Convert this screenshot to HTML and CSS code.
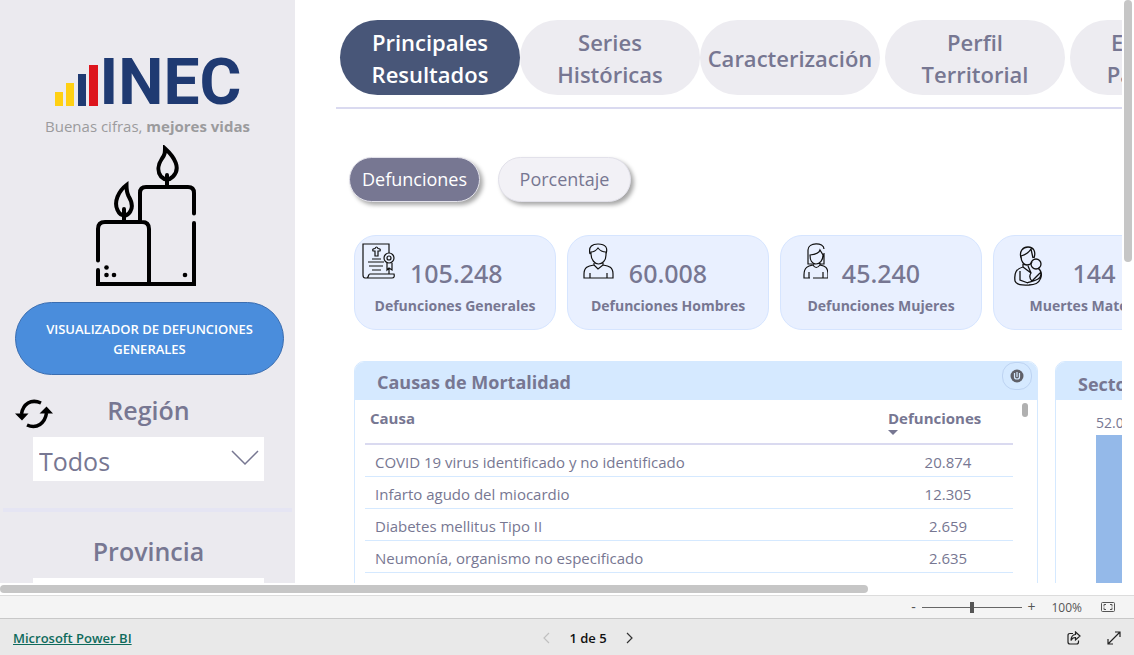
FILE: index.html
```html
<!DOCTYPE html>
<html lang="es">
<head>
<meta charset="utf-8">
<meta name="viewport" content="width=device-width, initial-scale=1">
<title>Visualizador de Defunciones Generales</title>
<link rel="stylesheet" href="styles.css">
</head>
<body>
<div class="app">
  <div class="viewport">
    <div class="report">
      <aside class="sidebar">
        <div class="brand">
          <div class="brand-mark">
            <svg class="brand-bars" viewBox="0 0 46 50" aria-hidden="true">
              <path fill="#ffd012" d="M1 36h8v14H1zM12 27h8v23h-8z"/>
              <path fill="#1f3a72" d="M24 18h8v32h-8z"/>
              <path fill="#dd151d" d="M35 9h9v41h-9z"/>
            </svg>
            <span class="brand-name">INEC</span>
          </div>
          <p class="brand-tag">Buenas cifras, <b>mejores vidas</b></p>
        </div>
        <svg class="candles" viewBox="92 145 106 142" aria-hidden="true">
          <g fill="none" stroke="#000" stroke-width="4" stroke-linecap="round">
            <path d="M139 221V193q0-6 6-6h42q6 0 6 6v20.500M193 223v61H97v-14M97 260.500V229q0-7 7-7h37q7 0 7 7v55"/>
            <path d="M164 148.500c10 9 16 20 8 28-4 4-8 4-12 0-4-5-3-12 1-18 3-4 3-6 3-10zM125.500 185c-8 6-13 17-9 25 3 7 10 7 13 1 3-5 1-10-2-15-2-4-2-7-2-11z"/>
            <path d="M166 175v12M123 209v12"/>
          </g>
          <g><circle cx="105.500" cy="267.500" r="2.300"/><circle cx="105.500" cy="275" r="2.300"/><circle cx="113" cy="275" r="2.300"/><circle cx="184" cy="275" r="2.300"/></g>
        </svg>
        <button class="report-title" type="button">VISUALIZADOR DE DEFUNCIONES GENERALES</button>
        <section class="filter">
          <div class="filter-head">
            <button class="reset" type="button" aria-label="Restablecer filtros">
              <svg viewBox="0 0 38 30" aria-hidden="true">
                <g fill="none" stroke="#000" stroke-width="3.500"><path d="M26 4C16-.5 8 5 6.500 15M12 26c10 4.500 18-2 19.500-12"/></g>
                <path d="M0 14.500h13.500l-6.500 7zM24.500 14.500H38l-6.500-7z"/>
              </svg>
            </button>
            <label class="filter-label" for="region">Región</label>
          </div>
          <div class="picker">
            <select id="region"><option>Todos</option></select>
            <svg viewBox="0 0 28 16" aria-hidden="true"><path d="M1 1l13 13L27 1" fill="none" stroke="#777792" stroke-width="1.500"/></svg>
          </div>
        </section>
        <hr class="side-rule">
        <section class="filter">
          <div class="filter-head"><label class="filter-label" for="provincia">Provincia</label></div>
          <div class="picker">
            <select id="provincia"><option>Todos</option></select>
          </div>
        </section>
      </aside>

      <main class="content">
        <nav class="tabs">
          <div class="tab-group">
            <button class="tab tab-active" type="button">Principales Resultados</button>
            <button class="tab" type="button">Series Históricas</button>
            <button class="tab" type="button">Caracterización</button>
          </div>
          <button class="tab" type="button">Perfil Territorial</button>
          <button class="tab" type="button">Efecto de Pandemia</button>
        </nav>
        <div class="toggles">
          <button class="toggle toggle-active" type="button">Defunciones</button>
          <button class="toggle" type="button">Porcentaje</button>
        </div>
        <div class="cards">
          <article class="card">
            <svg class="card-icon" viewBox="0 0 34 36" aria-hidden="true"><g fill="none" stroke="#111" stroke-width="1.200">
              <path d="M5 35H3q-2 0-2-3V1h26v9M27 26v5M5 35c2-1 1-4 3-4h24q1 4-2 4H5M13 5.500q1.500-3 3 0 3 0 2 2.500h-2v5h-3V8h-2q-1-2.500 2-2.500zM10 16h9M6 19h16M7 23h14M10 27h9M25 20v7l2-2 3 2v-7"/>
              <circle cx="27" cy="15" r="5"/><circle cx="27" cy="15" r="2"/></g></svg>
            <strong class="card-value">105.248</strong>
            <span class="card-label">Defunciones Generales</span>
          </article>
          <article class="card">
            <svg class="card-icon" viewBox="0 0 34 36" aria-hidden="true"><g fill="none" stroke="#111" stroke-width="1.200">
              <path d="M10 9q4 0 7-4 3 4 8 4v3c0 6-4 9-7.500 9S10 17 10 11zM9 11C7 3 12 1 17 1c8 0 10 4 8 10M13 20v2l4 4 5-4v-2M13 22c-6 1-10 2-10 9v4h29v-4c0-7-4-8-10-9M9 30v5M26 30v5"/></g></svg>
            <strong class="card-value">60.008</strong>
            <span class="card-label">Defunciones Hombres</span>
          </article>
          <article class="card">
            <svg class="card-icon" viewBox="-9 0 34 36" aria-hidden="true"><g fill="none" stroke="#111" stroke-width="1.200">
              <path d="M9 21H5V7c0-8 16-8 16-1M21 10v11h-4M7 12q9-1 10-5l3 5c0 5-3 9-7 9s-6-4-6-9zM10 20v2q3 5 7 0v-2M10 22c-5 1-9 2-9 10v3h6M10 35h15v-3c0-8-3-9-8-10M6 29v6M20 29v6"/></g></svg>
            <strong class="card-value">45.240</strong>
            <span class="card-label">Defunciones Mujeres</span>
          </article>
          <article class="card card-maternal">
            <svg class="card-icon" viewBox="0 0 32 40" aria-hidden="true"><g fill="none" stroke="#111" stroke-width="1.300">
              <path d="M8 12C6 5 10 1 15 1c6 0 8 5 6 11M8 10q7-2 10-7l2 9M8 10c0 6 3 9 6 9 2 0 4-1 5-3M10 18v3c-7 2-9 6-8 14 2 5 9 4 15 4M7 25v9l8 3M15 20l3 7c-2 3-1 6 1 8l9-9M10 21l8 6M25 22c6 5 4 17-9 17M28 28c0 6-8 7-14 9"/>
              <circle cx="23" cy="18" r="5"/></g></svg>
            <strong class="card-value">144</strong>
            <span class="card-label">Muertes Maternas</span>
          </article>
        </div>
        <div class="panels">
          <section class="panel">
            <header class="panel-head">
              <h2>Causas de Mortalidad</h2>
              <button class="info" type="button" aria-label="Información">
                <svg viewBox="0 0 14 14" aria-hidden="true"><circle cx="7" cy="7" r="6.500" fill="#5f6068"/><path d="M4.500 4v4q0 2 2.500 2t2.500-2V4M7 3v5" fill="none" stroke="#d6e9ff" stroke-width="1.200"/></svg>
              </button>
            </header>
            <div class="panel-body">
              <table>
                <thead><tr><th scope="col">Causa</th><th class="num" scope="col">Defunciones<svg class="sort" viewBox="0 0 10 5" aria-hidden="true"><path d="M0 0h10L5 5z"/></svg></th></tr></thead>
                <tbody>
                  <tr><td>COVID 19 virus identificado y no identificado</td><td class="num">20.874</td></tr>
                  <tr><td>Infarto agudo del miocardio</td><td class="num">12.305</td></tr>
                  <tr><td>Diabetes mellitus Tipo II</td><td class="num">2.659</td></tr>
                  <tr><td>Neumonía, organismo no especificado</td><td class="num">2.635</td></tr>
                </tbody>
              </table>
              <span class="table-thumb"></span>
            </div>
          </section>
          <section class="panel panel-sector">
            <header class="panel-head"><h2>Sector</h2></header>
            <div class="chart">
              <span class="bar-label">52.088</span>
              <div class="bar"></div>
            </div>
          </section>
        </div>
      </main>
    </div>
    <div class="vscroll"><span></span></div>
    <div class="hscroll"><span></span></div>
  </div>

  <div class="zoombar">
    <button type="button" class="zoom-step" aria-label="Alejar">-</button>
    <input type="range" min="0" max="100" value="50" aria-label="Zoom">
    <button type="button" class="zoom-step" aria-label="Acercar">+</button>
    <span class="zoom-value">100%</span>
    <button type="button" aria-label="Ajustar a la página">
      <svg width="14" height="10" viewBox="0 0 14 10" aria-hidden="true"><g fill="none" stroke="#555"><rect x=".5" y=".5" width="13" height="9" rx="1"/><path d="M5 2.500H3v2M3 5.500v2h2M9 2.500h2v2M11 5.500v2H9"/></g></svg>
    </button>
  </div>
  <footer class="footer">
    <a href="#">Microsoft Power BI</a>
    <div class="pager">
      <button type="button" aria-label="Página anterior" disabled><svg width="8" height="12" viewBox="0 0 8 12" aria-hidden="true"><path d="M7 1L2 6l5 5" fill="none" stroke="#c0c0c0" stroke-width="1.200"/></svg></button>
      <span>1 de 5</span>
      <button type="button" aria-label="Página siguiente"><svg width="8" height="12" viewBox="0 0 8 12" aria-hidden="true"><path d="M1 1l5 5-5 5" fill="none" stroke="#333" stroke-width="1.200"/></svg></button>
    </div>
    <div class="actions">
      <button type="button" aria-label="Compartir"><svg width="14" height="14" viewBox="0 0 14 14" aria-hidden="true"><path d="M6 2.500H3q-2 0-2 2V11q0 2 2 2h6.500q2 0 2-2v-1.500M8.500 1l4.500 4-4.500 4V6.500Q5 6.500 4 9.500 4 4 8.500 3.500z" fill="none" stroke="#222" stroke-width="1.200"/></svg></button>
      <button type="button" aria-label="Pantalla completa"><svg width="14" height="14" viewBox="0 0 14 14" aria-hidden="true"><path d="M1 13L13 1M8 1h5v5M1 8v5h5" fill="none" stroke="#222" stroke-width="1.200"/></svg></button>
    </div>
  </footer>
</div>
</body>
</html>
```
FILE: styles.css
```css
* { box-sizing: border-box; }
body {
  margin: 0;
  font-family: "Open Sans", "Noto Sans", sans-serif;
  color: #777792;
  background: #fff;
}
button { padding: 0; border: 0; background: none; font: inherit; color: inherit; }
svg { display: block; }

.app { display: flex; flex-direction: column; height: 100vh; }
.viewport {
  flex: 1;
  min-height: 0;
  display: grid;
  grid-template: minmax(0, 1fr) 12px / minmax(0, 1fr) 12px;
}
.report { display: flex; overflow: hidden; }
.vscroll { padding: 0 2px; }
.vscroll span { display: block; height: 45%; border-radius: 4px; background: #c6c6c6; }
.hscroll { padding: 2px 0; }
.hscroll span { display: block; width: 77.400%; height: 8px; border-radius: 4px; background: #c6c6c6; }

/* Sidebar */
.sidebar {
  flex: none;
  width: 295px;
  display: flex;
  flex-direction: column;
  align-items: center;
  background: #ebeaef;
}
.sidebar > * { flex-shrink: 0; }
.brand { padding-top: 56px; }
.brand-mark { display: flex; justify-content: center; height: 52px; }
.brand-bars { width: 46px; height: 50px; }
.brand-name {
  font: 700 64px/54px Roboto, sans-serif;
  color: #1f3a72;
}
.brand-tag { margin: 8px 0 0; font-size: 15px; line-height: 20px; color: #9b9b9d; }
.candles { width: 106px; height: 142px; margin: 9px 4px 0 0; }
.report-title {
  width: 269px;
  height: 73px;
  margin: 15px 0 0 4px;
  padding: 0 20px;
  border: 1px solid #3a6db0;
  border-radius: 37px;
  background: #4a8ddc;
  color: #fff;
  font-size: 13px;
  font-weight: 600;
  line-height: 20px;
}
.filter { align-self: stretch; padding: 17px 31px 0 33px; }
.filter-head { position: relative; display: flex; justify-content: center; height: 45px; }
.filter-label { font-size: 25px; font-weight: 600; line-height: 36px; }
.reset { position: absolute; left: -18px; top: 7px; width: 38px; height: 30px; }
.picker {
  display: flex;
  align-items: center;
  position: relative;
  height: 44px;
  background: #fff;
}
.picker select {
  width: 100%;
  height: 100%;
  padding: 4px 40px 0 6px;
  border: 0;
  appearance: none;
  background: none;
  font: 400 25px/36px "Open Sans", sans-serif;
  color: #777792;
}
.picker svg { position: absolute; right: 5px; top: 13px; width: 28px; height: 16px; }
.side-rule { align-self: stretch; height: 4px; margin: 27px 3px 4px; border: 0; background: #e5e5f3; }

/* Content */
.content { flex: none; width: 1020px; padding: 20px 0 0 41px; }
.tabs { display: flex; gap: 5px; padding: 0 0 12px 4px; border-bottom: 2px solid #dadaf0; }
.tab-group { display: flex; }
.tab {
  flex: none;
  width: 180px;
  height: 75px;
  border-radius: 38px;
  background: #edecf1;
  font-size: 22px;
  font-weight: 600;
  line-height: 32px;
}
.tab { padding: 0 5px; }
.tab-group .tab:not(:last-child), .tabs > .tab { padding: 0 30px; }
.tab-group .tab-active { background: #485678; color: #fff; }
.toggles { display: flex; gap: 18px; padding: 48px 0 0 13px; }
.toggle {
  width: 133px;
  height: 45px;
  padding-bottom: 2px;
  border: 1px solid #e2e1ea;
  border-radius: 23px;
  background: #f2f1f6;
  box-shadow: 3px 3px 4px #a8a8a8;
  font-size: 18px;
}
.toggle-active { width: 131px; background: #777792; color: #fff; }
.cards { display: flex; gap: 11px; padding: 33px 0 0 18px; }
.card {
  flex: none;
  width: 202px;
  height: 95px;
  display: grid;
  grid-template: 51px 24px / 1fr auto 1fr;
  column-gap: 14px;
  padding: 7px 7px 0;
  align-content: start;
  border: 1px solid #d6e5ff;
  border-radius: 22px;
  background: #e9f0ff;
}
.card-icon { justify-self: end; width: 34px; height: 36px; }
.card-value { align-self: center; padding-top: 9px; font: 500 25px/36px "Noto Sans", sans-serif; }
.card-label { grid-column: 1 / -1; text-align: center; font-size: 14px; font-weight: 700; line-height: 24px; white-space: nowrap; }
.card-maternal { column-gap: 28px; }
.card-maternal .card-icon { width: 32px; height: 40px; margin-top: 3px; }
.panels { display: flex; gap: 17px; padding: 31px 0 0 18px; }
.panel {
  flex: none;
  width: 684px;
  height: 420px;
  border: 1px solid #d5e9ff;
  border-radius: 10px 10px 0 0;
}
.panel-sector { width: 240px; }
.panel-head {
  display: flex;
  justify-content: space-between;
  height: 38px;
  padding: 0 5px 0 22px;
  border-radius: 9px 9px 0 0;
  background: #d5e9ff;
}
.panel-head h2 { margin: 0; padding-top: 2px; font-size: 18px; line-height: 36px; }
.info { display: grid; place-items: center; width: 30px; height: 28px; border: 1px solid #bdd3f2; border-radius: 13px; }
.info svg { width: 14px; height: 14px; }
.panel-body { display: flex; gap: 9px; padding: 3px 9px 0 10px; }
table { flex: 1; border-collapse: separate; border-spacing: 0; table-layout: fixed; font-size: 15px; }
th { height: 42px; padding: 3px 5px 0; text-align: left; vertical-align: top; line-height: 24px; border-bottom: 2px solid #dadaf0; }
td { height: 32px; padding: 2px 10px 0; line-height: 24px; border-bottom: 1px solid #d5e9ff; }
.num { width: 130px; }
td.num { text-align: center; }
.sort { width: 10px; height: 5px; fill: #777792; }
.table-thumb { width: 6px; height: 14px; border-radius: 3px; background: #b0b0b0; }
.panel-sector h2 { padding-top: 4px; }
.chart { padding: 11px 0 0 40px; }
.bar-label { display: block; font-size: 14px; line-height: 24px; }
.bar { width: 90px; height: 300px; background: #94b9e9; }

/* Bottom bars */
.zoombar {
  flex: none;
  display: flex;
  align-items: center;
  justify-content: flex-end;
  height: 24px;
  padding-right: 19px;
  border-top: 1px solid #dcdcdc;
  border-bottom: 1px solid #c8c8c8;
  background: #f4f4f4;
  color: #555;
  font-size: 12px;
}
.zoom-step { width: 12px; font-size: 14px; line-height: 20px; }
.zoombar input { width: 100px; height: 20px; margin: 0 3px; appearance: none; background: none; }
.zoombar input::-webkit-slider-runnable-track { height: 1px; background: #666; }
.zoombar input::-webkit-slider-thumb { appearance: none; width: 4px; height: 11px; margin-top: -5px; background: #555; }
.zoom-value { margin: 0 19px 0 14px; }
.footer {
  flex: none;
  display: grid;
  grid-template-columns: 1fr auto 1fr;
  align-items: center;
  height: 36px;
  padding: 2px 13px 0;
  background: #e9e9e9;
  font-size: 13px;
  font-weight: 600;
}
.footer a { color: #0f6b5c; justify-self: start; }
.pager { display: flex; align-items: center; gap: 19px; padding-left: 42px; color: #111; }
.actions { display: flex; justify-content: flex-end; gap: 26px; }
```
